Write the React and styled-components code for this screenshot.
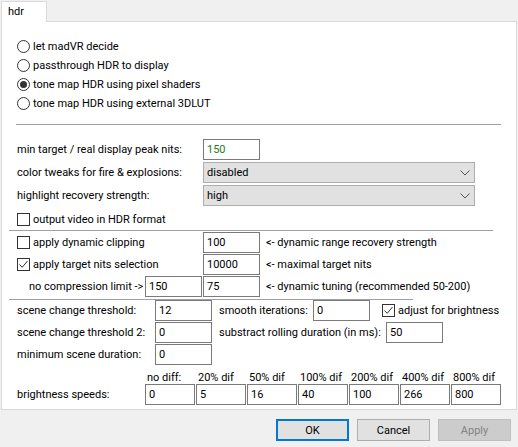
import React from 'react';
import styled, { createGlobalStyle } from 'styled-components';

const GlobalStyle = createGlobalStyle`
  html, body {
    margin: 0;
    padding: 0;
    background: #f0f0f0;
  }
  body {
    font-family: Roboto, "Noto Sans", sans-serif;
    font-size: 11px;
    color: #000;
  }
`;

const Window = styled.div`
  width: 518px;
  height: 447px;
  display: flex;
  flex-direction: column;
  overflow: hidden;
`;

const TabBar = styled.div`
  height: 21px;
  display: flex;
  padding-left: 1px;
`;

const Tab = styled.div`
  position: relative;
  z-index: 1;
  margin-top: 1px;
  width: 46px;
  height: 21px;
  box-sizing: border-box;
  border: 1px solid #d9d9d9;
  border-bottom: none;
  background: #fff;
  padding-left: 6px;
  line-height: 19px;
`;

const Panel = styled.div`
  margin-left: 1px;
  width: 516px;
  height: 389px;
  box-sizing: border-box;
  border: 1px solid #d9d9d9;
  background: #fff;
  display: flex;
  flex-direction: column;
`;

const Stack = styled.div`
  display: flex;
  flex-direction: column;
  gap: ${p => p.$gap || 0}px;
  margin-top: ${p => p.$top || 0}px;
  margin-left: ${p => p.$left || 0}px;
`;

const OptionRow = styled.div`
  display: flex;
  align-items: center;
  height: 19px;
  gap: 3px;
  white-space: nowrap;
`;

const RadioDot = styled.span`
  width: 13px;
  height: 13px;
  box-sizing: border-box;
  border: 1px solid #333;
  border-radius: 50%;
  background: #fff;
  display: flex;
  align-items: center;
  justify-content: center;
  flex: none;
  &::after {
    content: '';
    width: 7px;
    height: 7px;
    border-radius: 50%;
    background: ${p => (p.$on ? '#333' : 'transparent')};
  }
`;

const Box = styled.span`
  width: 13px;
  height: 13px;
  box-sizing: border-box;
  border: 1px solid #333;
  background: #fff;
  display: flex;
  align-items: center;
  justify-content: center;
  flex: none;
`;

const Rule = styled.div`
  height: 1px;
  background: #a0a0a0;
  width: ${p => p.$w}px;
  margin-top: ${p => p.$top}px;
  margin-left: ${p => p.$left}px;
`;

const Row = styled.div`
  display: flex;
  align-items: center;
  height: 21px;
  gap: ${p => p.$gap || 0}px;
  white-space: nowrap;
`;

const Label = styled.span`
  width: ${p => p.$w}px;
  padding-left: ${p => p.$indent || 0}px;
  box-sizing: border-box;
  flex: none;
  display: flex;
  align-items: center;
  gap: 3px;
`;

const Field = styled.div`
  width: ${p => p.$w || 57}px;
  height: 21px;
  box-sizing: border-box;
  border: 1px solid #7a7a7a;
  background: #fff;
  padding-left: 3px;
  display: flex;
  align-items: center;
  flex: none;
  color: ${p => p.$color || '#000'};
`;

const Select = styled.div`
  width: 272px;
  height: 21px;
  box-sizing: border-box;
  border: 1px solid #adadad;
  background: #e1e1e1;
  padding: 0 4px 0 3px;
  display: flex;
  align-items: center;
  justify-content: space-between;
`;

const Hint = styled.span`
  margin-left: ${p => p.$left || 6}px;
`;

const HeaderRow = styled.div`
  display: flex;
  height: 14px;
  margin-top: 5px;
  margin-left: 145px;
  align-items: center;
  white-space: nowrap;
`;

const HeaderCell = styled.span`
  width: 51px;
  flex: none;
`;

const Footer = styled.div`
  display: flex;
  justify-content: flex-end;
  gap: 8px;
  margin-top: 9px;
  padding-right: 7px;
`;

const Button = styled.div`
  width: 73px;
  height: 22px;
  box-sizing: border-box;
  display: flex;
  align-items: center;
  justify-content: center;
  background: ${p => (p.$disabled ? '#cccccc' : '#e1e1e1')};
  border: 1px solid ${p => (p.$default ? '#0078d7' : p.$disabled ? '#bfbfbf' : '#adadad')};
  box-shadow: ${p => (p.$default ? 'inset 0 0 0 1px #0078d7' : 'none')};
  color: ${p => (p.$disabled ? '#838383' : '#000')};
`;

function Check({ on }) {
  return (
    <Box>
      {on && (
        <svg width="11" height="11" viewBox="0 0 11 11">
          <polyline points="1.5,5.5 4.2,8.3 9.5,2" fill="none" stroke="#333" strokeWidth="1" />
        </svg>
      )}
    </Box>
  );
}

function Chevron() {
  return (
    <svg width="10" height="6" viewBox="0 0 10 6">
      <polyline points="0.5,0.5 5,5 9.5,0.5" fill="none" stroke="#555" strokeWidth="1" />
    </svg>
  );
}

const radios = [
  { label: 'let madVR decide' },
  { label: 'passthrough HDR to display' },
  { label: 'tone map HDR using pixel shaders', on: true },
  { label: 'tone map HDR using external 3DLUT' },
];

const speedHeads = ['no diff:', '20% dif', '50% dif', '100% dif', '200% dif', '400% dif', '800% dif'];
const speeds = ['0', '5', '16', '40', '100', '266', '800'];

export default function App() {
  return (
    <Window>
      <GlobalStyle />
      <TabBar>
        <Tab>hdr</Tab>
      </TabBar>
      <Panel>
        <Stack $top={15} $left={15}>
          {radios.map(r => (
            <OptionRow key={r.label}>
              <RadioDot $on={r.on} />
              {r.label}
            </OptionRow>
          ))}
        </Stack>

        <Rule $top={11} $left={14} $w={485} />

        <Stack $top={14} $left={15} $gap={2}>
          <Row>
            <Label $w={186}>min target / real display peak nits:</Label>
            <Field $color="#1e7b1e">150</Field>
          </Row>
          <Row>
            <Label $w={186}>color tweaks for fire &amp; explosions:</Label>
            <Select>
              disabled
              <Chevron />
            </Select>
          </Row>
          <Row>
            <Label $w={186}>highlight recovery strength:</Label>
            <Select>
              high
              <Chevron />
            </Select>
          </Row>
        </Stack>

        <Stack $top={4} $left={15}>
          <OptionRow>
            <Check />
            output video in HDR format
          </OptionRow>
        </Stack>

        <Rule $top={1} $left={7} $w={484} />

        <Stack $top={1} $left={15} $gap={1}>
          <Row>
            <Label $w={186}>
              <Check />
              apply dynamic clipping
            </Label>
            <Field>100</Field>
            <Hint>&lt;- dynamic range recovery strength</Hint>
          </Row>
          <Row>
            <Label $w={186}>
              <Check on />
              apply target nits selection
            </Label>
            <Field>10000</Field>
            <Hint>&lt;- maximal target nits</Hint>
          </Row>
          <Row $gap={1}>
            <Label $w={127} $indent={12}>no compression limit -&gt;</Label>
            <Field>150</Field>
            <Field>75</Field>
            <Hint $left={5}>&lt;- dynamic tuning (recommended 50-200)</Hint>
          </Row>
        </Stack>

        <Rule $top={2} $left={7} $w={404} />

        <Stack $left={15} $gap={1}>
          <Row>
            <Label $w={138}>scene change threshold:</Label>
            <Field>12</Field>
            <Label $w={101} $indent={7}>smooth iterations:</Label>
            <Field>0</Field>
            <Label $w={200} $indent={12}>
              <Check on />
              adjust for brightness
            </Label>
          </Row>
          <Row>
            <Label $w={138}>scene change threshold 2:</Label>
            <Field>0</Field>
            <Label $w={174} $indent={7}>substract rolling duration (in ms):</Label>
            <Field>50</Field>
          </Row>
          <Row>
            <Label $w={138}>minimum scene duration:</Label>
            <Field>0</Field>
          </Row>
        </Stack>

        <HeaderRow>
          {speedHeads.map(h => (
            <HeaderCell key={h}>{h}</HeaderCell>
          ))}
        </HeaderRow>
        <Stack $left={15}>
          <Row $gap={1}>
            <Label $w={127}>brightness speeds:</Label>
            {speeds.map((s, i) => (
              <Field key={i} $w={50}>{s}</Field>
            ))}
          </Row>
        </Stack>
      </Panel>
      <Footer>
        <Button $default>OK</Button>
        <Button>Cancel</Button>
        <Button $disabled>Apply</Button>
      </Footer>
    </Window>
  );
}
